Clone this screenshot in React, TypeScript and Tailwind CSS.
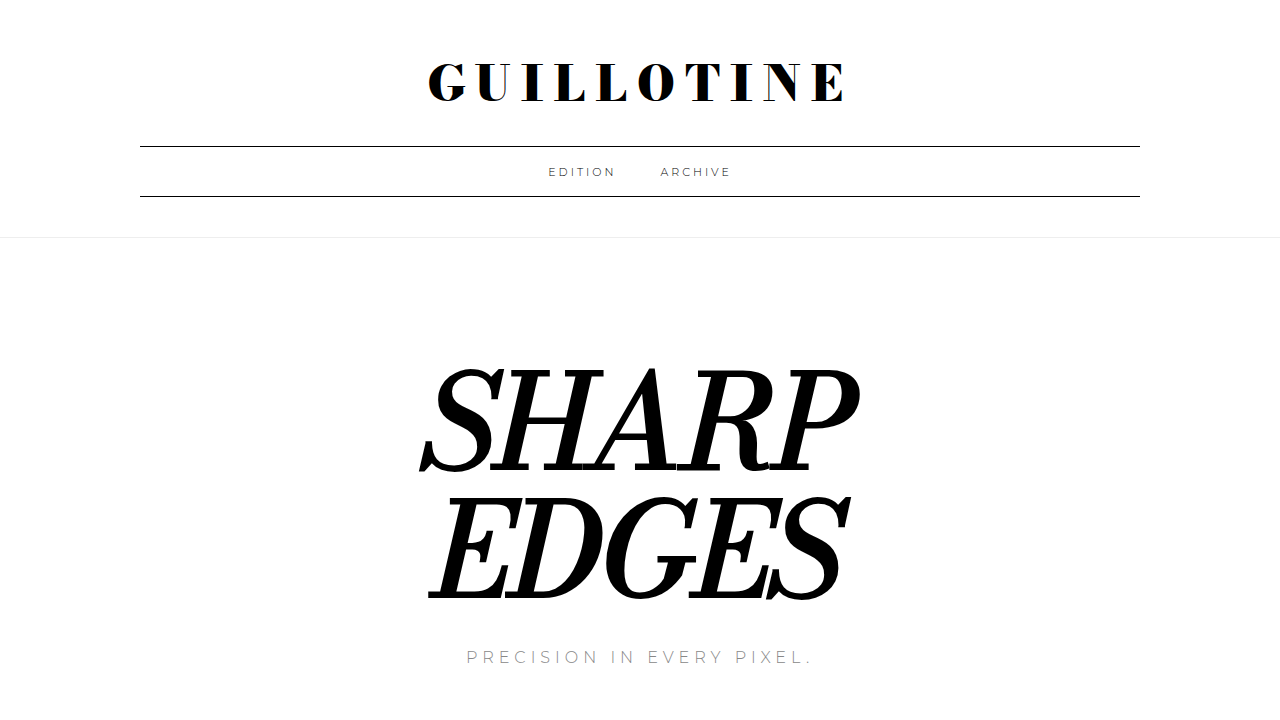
export default function App() {
  return (
    <div className="min-h-screen bg-white text-black font-['Montserrat','Open_Sans',sans-serif]">
      <header className="border-b border-[#eeeeee] px-10 py-10 text-center">
        <h1 className="mb-[18px] font-['Bodoni_Moda','Liberation_Serif',serif] text-[48px] leading-[88px] font-black tracking-[10px] uppercase">
          Guillotine
        </h1>
        <nav className="mx-auto flex max-w-[1000px] justify-center gap-11 border-y border-black pt-[17px] pb-[15px] text-[11px] leading-[17px] font-light tracking-[3px] uppercase">
          <a href="#edition">Edition</a>
          <a href="#archive">Archive</a>
        </nav>
      </header>
      <main className="px-10 pt-[120px] pb-10 text-center">
        <h2 className="font-['Bodoni_Moda','Liberation_Serif',serif] text-[128px] leading-[128px] font-normal tracking-[1px] uppercase italic [-webkit-text-stroke:4px_black]">
          Sharp
          <br />
          Edges
        </h2>
        <p className="mt-8 text-base leading-6 font-light tracking-[5px] text-[#888888] uppercase">
          Precision in every pixel.
        </p>
      </main>
    </div>
  );
}
